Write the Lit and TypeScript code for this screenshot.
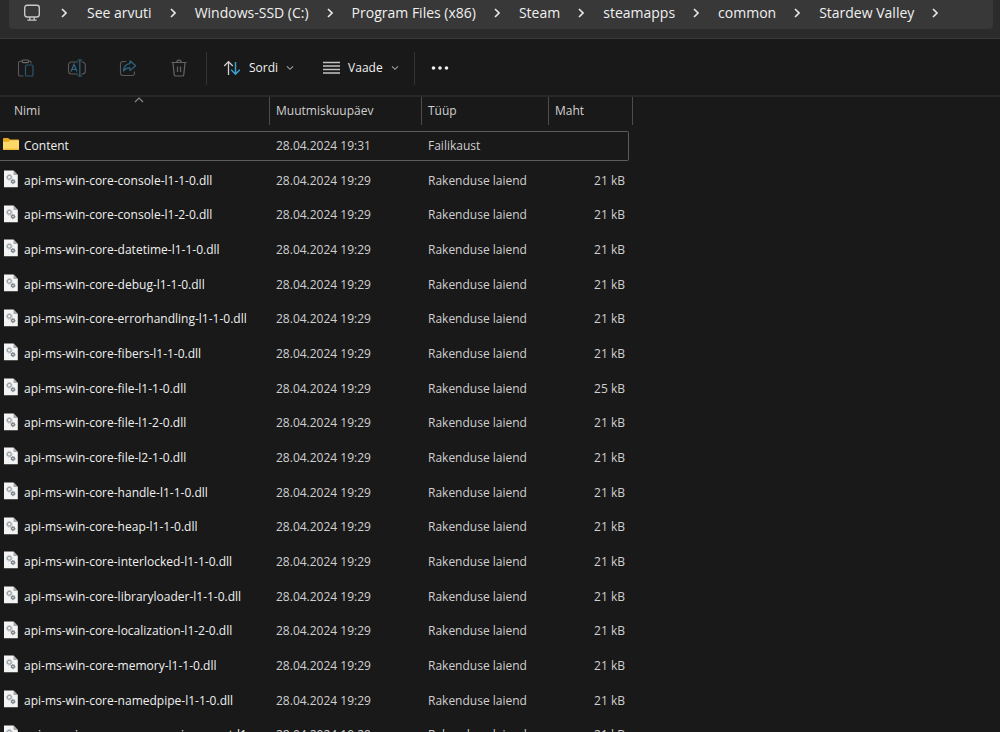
import { LitElement, html, css, svg, nothing } from "lit";
import { customElement, state } from "lit/decorators.js";

interface Entry {
  name: string;
  date: string;
  type: string;
  size: string;
  folder?: boolean;
}

const dll = (name: string, size = "21 kB"): Entry => ({
  name: `api-ms-win-core-${name}.dll`,
  date: "28.04.2024 19:29",
  type: "Rakenduse laiend",
  size,
});

const ENTRIES: Entry[] = [
  { name: "Content", date: "28.04.2024 19:31", type: "Failikaust", size: "", folder: true },
  dll("console-l1-1-0"),
  dll("console-l1-2-0"),
  dll("datetime-l1-1-0"),
  dll("debug-l1-1-0"),
  dll("errorhandling-l1-1-0"),
  dll("fibers-l1-1-0"),
  dll("file-l1-1-0", "25 kB"),
  dll("file-l1-2-0"),
  dll("file-l2-1-0"),
  dll("handle-l1-1-0"),
  dll("heap-l1-1-0"),
  dll("interlocked-l1-1-0"),
  dll("libraryloader-l1-1-0"),
  dll("localization-l1-2-0"),
  dll("memory-l1-1-0"),
  dll("namedpipe-l1-1-0"),
  dll("processenvironment-l1-1-0"),
];

const CRUMBS = [
  "See arvuti",
  "Windows-SSD (C:)",
  "Program Files (x86)",
  "Steam",
  "steamapps",
  "common",
  "Stardew Valley",
];

const icon = (w: number, h: number, body: unknown) => html`<svg
  width=${w} height=${h} viewBox="0 0 ${w} ${h}" fill="none" aria-hidden="true"
>${body}</svg>`;

const monitor = icon(18, 18, svg`
  <rect x="1.7" y="1.2" width="14.6" height="11.8" rx="2.4" stroke="#c8c8c8" stroke-width="1.4"/>
  <path d="M6.8 13v2.600M11.200 13v2.600M4.400 16.200h9.200" stroke="#c8c8c8" stroke-width="1.300"/>`);

const crumbArrow = icon(6, 10, svg`
  <path d="M1 1l4 4-4 4" stroke="#e6e6e6" stroke-width="1.600"/>`);

const paste = icon(18, 18, svg`
  <path d="M5.500 2.300H3A1.500 1.500 0 0 0 1.500 3.800V15.500A1.500 1.500 0 0 0 3 17H6.500M11.500 2.300H13" stroke="#5a5a5a" stroke-width="1.100"/>
  <path d="M13 2.300a1.200 1.200 0 0 1 1.100 1.200V4.500" stroke="#5a5a5a" stroke-width="1.100"/>
  <rect x="5" y="1" width="6.800" height="2.600" rx="1.300" stroke="#6a6a6a" stroke-width="1.100"/>
  <rect x="8.500" y="6" width="7.500" height="11" rx="1.300" stroke="#2b5871" stroke-width="1.200"/>`);

const rename = icon(20, 18, svg`
  <path d="M11 3H4.500A3 3 0 0 0 1.500 6v6a3 3 0 0 0 3 3H11M14.500 3h.8A3 3 0 0 1 18.300 6v6a3 3 0 0 1-3 3h-.8" stroke="#5a5a5a" stroke-width="1.100"/>
  <path d="M4 12.500L7 5.300l3 7.200M5 10.300h4" stroke="#2f6580" stroke-width="1.200"/>
  <path d="M12.800 1v16M10.600 1h4.400M10.600 17h4.400" stroke="#2f6580" stroke-width="1.200"/>`);

const share = icon(18, 18, svg`
  <path d="M7 2.500H4A2.500 2.500 0 0 0 1.500 5v9A2.500 2.500 0 0 0 4 16.500h9a2.500 2.500 0 0 0 2.500-2.500v-1.500" stroke="#5a5a5a" stroke-width="1.100"/>
  <path d="M11 1.800L16.600 6.800 11 11.600V8.900C8 8.800 6 9.800 4.500 12 4.800 8 7 5 11 4.700Z" stroke="#2f6580" stroke-width="1.200" stroke-linejoin="round"/>`);

const trash = icon(18, 18, svg`
  <path d="M1.500 3.500h15M6.800 3.300a2.200 2.200 0 0 1 4.400 0M3 3.800L4.200 15.600A1.500 1.500 0 0 0 5.700 17h6.600a1.500 1.500 0 0 0 1.500-1.400L15 3.800" stroke="#646464" stroke-width="1.200"/>
  <path d="M7.500 7.500v5.500M10.500 7.500v5.500" stroke="#646464" stroke-width="1.200"/>`);

const sort = icon(18, 16, svg`
  <path d="M5.500 15V2M1.200 6L5.500 1.600 9.800 6" stroke="#d2d2d2" stroke-width="1.300"/>
  <path d="M12.500 2v12M8.200 9.800L12.500 14.200 16.800 9.800" stroke="#3d9fd3" stroke-width="1.500"/>`);

const lines = icon(18, 14, svg`
  <path d="M1 1.500h17M1 5h17M1 8.500h17M1 12h17" stroke="#c4c4c4" stroke-width="1.300"/>`);

const down = icon(8, 6, svg`
  <path d="M1 1.300l3 3 3-3" stroke="#a0a0a0" stroke-width="1.100"/>`);

const up = icon(10, 6, svg`
  <path d="M1 5l4-4 4 4" stroke="#8c8c8c" stroke-width="1.100"/>`);

const dots = icon(18, 6, svg`
  <g fill="#f2f2f2"><circle cx="2.500" cy="3" r="1.800"/><circle cx="9" cy="3" r="1.800"/><circle cx="15.500" cy="3" r="1.800"/></g>`);

const folderIcon = icon(18, 18, svg`
  <path d="M1 4A1 1 0 0 1 2 3H6.200L8 4.500H16a1 1 0 0 1 1 1V14.500H1Z" fill="#e9a820"/>
  <path d="M1 6.700H6.500L8.200 5.300H16a1 1 0 0 1 1 1V14a1 1 0 0 1-1 1H2a1 1 0 0 1-1-1Z" fill="#ffd868"/>
  <path d="M1 13.500V14a1 1 0 0 0 1 1H16a1 1 0 0 0 1-1v-.5Z" fill="#f3bd3c"/>`);

const dllIcon = icon(18, 18, svg`
  <path d="M2 .5H11.500L15.800 5V17.300H2Z" fill="#f4f4f4"/>
  <path d="M11.500 .5L15.800 5H11.500Z" fill="#a9a9a9"/>
  <circle cx="7.300" cy="7.300" r="1.900" stroke="#9aa3aa" stroke-width="1.200"/>
  <circle cx="7.300" cy="7.300" r="2.800" stroke="#a4abb0" stroke-width=".9" stroke-dasharray="1.100 1.100"/>
  <circle cx="11" cy="11.600" r="1.400" stroke="#737b82" stroke-width="1.300"/>
  <circle cx="11" cy="11.600" r="2.200" stroke="#858c92" stroke-width=".8" stroke-dasharray=".9 .8"/>`);

@customElement("app-root")
export class AppRoot extends LitElement {
  @state() private selected = 0;

  static styles = css`
    :host {
      display: flex;
      flex-direction: column;
      height: 100vh;
      overflow: hidden;
      background: #191919;
      color: #dedede;
      font: 12px/16px "Open Sans", "Noto Sans", sans-serif;
    }
    svg {
      display: block;
      flex: none;
    }
    button {
      font: inherit;
      color: inherit;
      background: none;
      border: 0;
      padding: 0;
      display: flex;
      align-items: center;
      justify-content: center;
    }
    .address {
      background: #2b2b2b;
      border-bottom: 1px solid #3a3a3a;
      padding: 0 7px 9px 9px;
    }
    .crumbs {
      display: flex;
      align-items: center;
      height: 29px;
      box-sizing: border-box;
      margin: 0;
      padding: 0 14px 4px;
      list-style: none;
      background: #383838;
      border-radius: 0 0 4px 4px;
      font-size: 14px;
      line-height: 20px;
      color: #f0f0f0;
    }
    .crumb {
      display: flex;
      align-items: center;
      gap: 18px;
      margin-right: 19px;
      white-space: nowrap;
    }
    .crumb.root {
      gap: 20px;
      margin-right: 20px;
    }
    .crumb a {
      color: inherit;
      text-decoration: none;
    }
    .toolbar {
      display: flex;
      align-items: center;
      box-sizing: border-box;
      height: 58px;
      padding: 2px 0 0 8px;
      border-bottom: 2px solid #282828;
      color: #f0f0f0;
    }
    .tools {
      display: flex;
      gap: 15px;
    }
    .tool {
      width: 36px;
      height: 36px;
    }
    .sep {
      width: 1px;
      height: 33px;
      margin: 0 16px 0 9px;
      background: #333;
    }
    .menu {
      height: 36px;
      gap: 8px;
      margin-right: 28px;
    }
    .menu.last {
      margin-right: 6px;
    }
    .files {
      flex: 1;
      min-height: 0;
      overflow: hidden;
    }
    table {
      border-collapse: collapse;
      table-layout: fixed;
      width: 633px;
    }
    .c-name {
      width: 270px;
    }
    .c-date {
      width: 152px;
    }
    .c-type {
      width: 127px;
    }
    .c-size {
      width: 84px;
    }
    th,
    td {
      padding: 0;
      text-align: left;
      font-weight: 400;
    }
    th {
      height: 31px;
      vertical-align: top;
    }
    .head {
      display: block;
      position: relative;
      box-sizing: border-box;
      width: 100%;
      height: 28px;
      padding-left: 6px;
      border-right: 1px solid #4c4c4c;
      text-align: left;
      color: #d0d0d0;
    }
    .head.first {
      padding-left: 14px;
    }
    .caret {
      position: absolute;
      inset: 0 0 auto 8px;
      display: flex;
      justify-content: center;
    }
    tbody tr {
      height: 35px;
    }
    tbody tr:nth-child(3n) {
      height: 34px;
    }
    .cell {
      display: flex;
      align-items: center;
      box-sizing: border-box;
      height: 30px;
      padding-left: 6px;
      border: solid transparent;
      border-width: 1px 0;
      color: #d0d0d0;
      white-space: nowrap;
    }
    .cell.name {
      gap: 4px;
      padding: 0 6px 0 2px;
      color: #f0f0f0;
    }
    .cell.name svg {
      margin-bottom: 3px;
    }
    .label {
      overflow: hidden;
      text-overflow: ellipsis;
    }
    .cell.size {
      justify-content: flex-end;
      margin-right: 4px;
      padding-right: 3px;
      border-right-width: 1px;
      border-radius: 0 2px 2px 0;
    }
    .focused .cell {
      border-color: #5c5c5c;
    }
  `;

  private row(e: Entry, i: number) {
    return html`<tr class=${i === this.selected ? "focused" : nothing} @click=${() => (this.selected = i)}>
      <td><div class="cell name">${e.folder ? folderIcon : dllIcon}<span class="label">${e.name}</span></div></td>
      <td><div class="cell">${e.date}</div></td>
      <td><div class="cell">${e.type}</div></td>
      <td><div class="cell size">${e.size}</div></td>
    </tr>`;
  }

  render() {
    return html`
      <nav class="address">
        <ol class="crumbs">
          <li class="crumb root">${monitor}${crumbArrow}</li>
          ${CRUMBS.map((c) => html`<li class="crumb"><a href="#">${c}</a>${crumbArrow}</li>`)}
        </ol>
      </nav>
      <div class="toolbar" role="toolbar">
        <div class="tools">
          <button class="tool" disabled>${paste}</button>
          <button class="tool" disabled>${rename}</button>
          <button class="tool" disabled>${share}</button>
          <button class="tool" disabled>${trash}</button>
        </div>
        <span class="sep"></span>
        <button class="menu">${sort}<span>Sordi</span>${down}</button>
        <button class="menu last">${lines}<span>Vaade</span>${down}</button>
        <span class="sep"></span>
        <button>${dots}</button>
      </div>
      <main class="files">
        <table>
          <colgroup>
            <col class="c-name" /><col class="c-date" /><col class="c-type" /><col class="c-size" />
          </colgroup>
          <thead>
            <tr>
              <th aria-sort="ascending">
                <button class="head first"><span class="caret">${up}</span>Nimi</button>
              </th>
              <th><button class="head">Muutmiskuupäev</button></th>
              <th><button class="head">Tüüp</button></th>
              <th><button class="head">Maht</button></th>
            </tr>
          </thead>
          <tbody>${ENTRIES.map((e, i) => this.row(e, i))}</tbody>
        </table>
      </main>
    `;
  }
}
